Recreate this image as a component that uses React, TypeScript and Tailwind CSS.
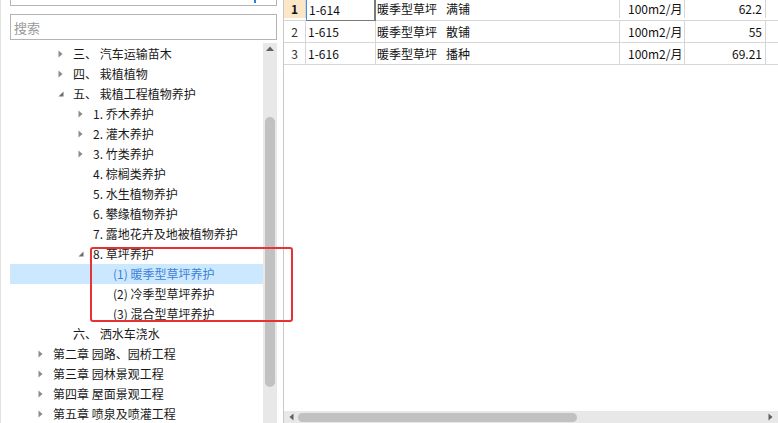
import React from 'react';

type Node = {
  label: string;
  level: number;
  arrow?: 'closed' | 'open';
  selected?: boolean;
};

const treeNodes: Node[] = [
  { label: '三、 汽车运输苗木', level: 2, arrow: 'closed' },
  { label: '四、 栽植植物', level: 2, arrow: 'closed' },
  { label: '五、 栽植工程植物养护', level: 2, arrow: 'open' },
  { label: '1. 乔木养护', level: 3, arrow: 'closed' },
  { label: '2. 灌木养护', level: 3, arrow: 'closed' },
  { label: '3. 竹类养护', level: 3, arrow: 'closed' },
  { label: '4. 棕榈类养护', level: 3 },
  { label: '5. 水生植物养护', level: 3 },
  { label: '6. 攀缘植物养护', level: 3 },
  { label: '7. 露地花卉及地被植物养护', level: 3 },
  { label: '8. 草坪养护', level: 3, arrow: 'open' },
  { label: '(1) 暖季型草坪养护', level: 4, selected: true },
  { label: '(2) 冷季型草坪养护', level: 4 },
  { label: '(3) 混合型草坪养护', level: 4 },
  { label: '六、 洒水车浇水', level: 2 },
  { label: '第二章 园路、园桥工程', level: 1, arrow: 'closed' },
  { label: '第三章 园林景观工程', level: 1, arrow: 'closed' },
  { label: '第四章 屋面景观工程', level: 1, arrow: 'closed' },
  { label: '第五章 喷泉及喷灌工程', level: 1, arrow: 'closed' },
];

const indent: Record<number, string> = {
  1: 'pl-[26px]',
  2: 'pl-[46px]',
  3: 'pl-[66px]',
  4: 'pl-[86px]',
};

const rows = [
  { no: '1', code: '1-614', name: '暖季型草坪', kind: '满铺', unit: '100m2/月', value: '62.2' },
  { no: '2', code: '1-615', name: '暖季型草坪', kind: '散铺', unit: '100m2/月', value: '55' },
  { no: '3', code: '1-616', name: '暖季型草坪', kind: '播种', unit: '100m2/月', value: '69.21' },
];

function Arrow({ kind }: { kind?: 'closed' | 'open' }) {
  if (kind === 'closed') {
    return (
      <svg width="5" height="8" viewBox="0 0 5 8">
        <path d="M0.5 0.5 L4.5 4 L0.5 7.5 Z" fill="#8a8a8a" />
      </svg>
    );
  }
  if (kind === 'open') {
    return (
      <svg width="6" height="6" viewBox="0 0 6 6">
        <path d="M5.5 0.5 L5.5 5.5 L0.5 5.5 Z" fill="#6e6e6e" />
      </svg>
    );
  }
  return null;
}

function TreeRow({ node }: { node: Node }) {
  return (
    <div
      className={`flex h-5 items-center ${indent[node.level]} ${
        node.selected ? 'bg-[#cce8ff] text-[#3c82d6]' : 'text-[#1a1a1a]'
      }`}
    >
      <span className="flex w-[17px] shrink-0 items-center justify-start pl-[2px]">
        <Arrow kind={node.arrow} />
      </span>
      <span className="whitespace-nowrap">{node.label}</span>
    </div>
  );
}

export default function App() {
  return (
    <div
      className="relative flex h-[423px] w-[778px] overflow-hidden bg-white text-[12px] leading-none"
      style={{ fontFamily: '"Microsoft YaHei", "Noto Sans CJK SC", sans-serif' }}
    >
      {/* left: tree panel */}
      <aside className="flex w-[284px] shrink-0 flex-col border-r border-[#c8c8c8] border-l border-l-[#e2e2e2]">
        <div className="relative ml-[9px] mr-[6px] h-[6px] border-x border-b border-[#b4b4b4]">
          <span className="absolute right-[20px] top-0 h-[3px] w-[2px] bg-[#2a7de1]" />
        </div>
        <div className="ml-[9px] mr-[6px] mt-[8px] flex h-[26px] items-center border border-[#b4b4b4] px-[3px] text-[13px] text-[#9a9a9a]">
          搜索
        </div>
        <div className="mt-[3px] flex min-h-0 flex-1">
          <div className="flex-1 pl-[9px] pt-[1px]">
            {treeNodes.map((n) => (
              <TreeRow key={n.label} node={n} />
            ))}
          </div>
          <div className="mr-[6px] flex w-[14px] flex-col items-center bg-[#e8e8e8]">
            <svg width="8" height="5" viewBox="0 0 8 5" className="mt-[3px]">
              <path d="M0 5 L4 0.5 L8 5 Z" fill="#606060" />
            </svg>
            <div className="mt-[66px] h-[270px] w-[10px] rounded-full bg-[#c1c1c1]" />
          </div>
        </div>
      </aside>

      {/* right: quota grid */}
      <main
        className="flex min-w-0 flex-1 flex-col text-[#111]"
        style={{ fontFamily: '"SimSun", "Noto Sans CJK SC", sans-serif' }}
      >
        <div className="flex-1">
          {rows.map((r, i) => (
            <div
              key={r.no}
              className={`flex border-b border-[#d6d6d6] ${i === 0 ? 'h-[21px] pb-[2px]' : 'h-[22px]'}`}
            >
              <div
                className={`flex w-[22px] shrink-0 items-center justify-center border-r border-[#d6d6d6] ${
                  i === 0 ? 'bg-[#fde6c8] font-bold' : 'bg-white text-[#333]'
                }`}
              >
                {r.no}
              </div>
              <div
                className={`flex w-[70px] shrink-0 items-center pl-[2px] ${
                  i === 0
                    ? 'border-l border-l-[#3d8ee8] border-r-2 border-r-[#7a7a7a] border-b border-b-[#7a7a7a] -mb-[3px]'
                    : 'border-r border-[#d6d6d6]'
                }`}
              >
                {r.code}
              </div>
              <div className="flex w-[244px] shrink-0 items-center gap-[9px] border-r border-[#d6d6d6] pl-[1px]">
                <span>{r.name}</span>
                <span>{r.kind}</span>
              </div>
              <div className="flex w-[65px] shrink-0 items-center border-r border-[#d6d6d6] pl-[8px]">
                {r.unit}
              </div>
              <div className="flex w-[81px] shrink-0 items-center justify-end border-r border-[#d6d6d6] pr-[3px]">
                {r.value}
              </div>
              <div className="flex-1" />
            </div>
          ))}
        </div>
        <div className="flex h-[12px] items-center bg-[#e8e8e8]">
          <svg width="5" height="8" viewBox="0 0 5 8" className="ml-[5px]">
            <path d="M4.5 0.5 L0.5 4 L4.5 7.5 Z" fill="#606060" />
          </svg>
          <div className="ml-[4px] h-[9px] w-[279px] rounded-full bg-[#c1c1c1]" />
          <div className="flex-1" />
          <svg width="5" height="8" viewBox="0 0 5 8" className="mr-[5px]">
            <path d="M0.5 0.5 L4.5 4 L0.5 7.5 Z" fill="#606060" />
          </svg>
        </div>
      </main>

      {/* annotation box */}
      <div className="pointer-events-none absolute left-[90px] top-[247px] h-[75px] w-[203px] rounded-[3px] border-2 border-[#e53333]" />
    </div>
  );
}
